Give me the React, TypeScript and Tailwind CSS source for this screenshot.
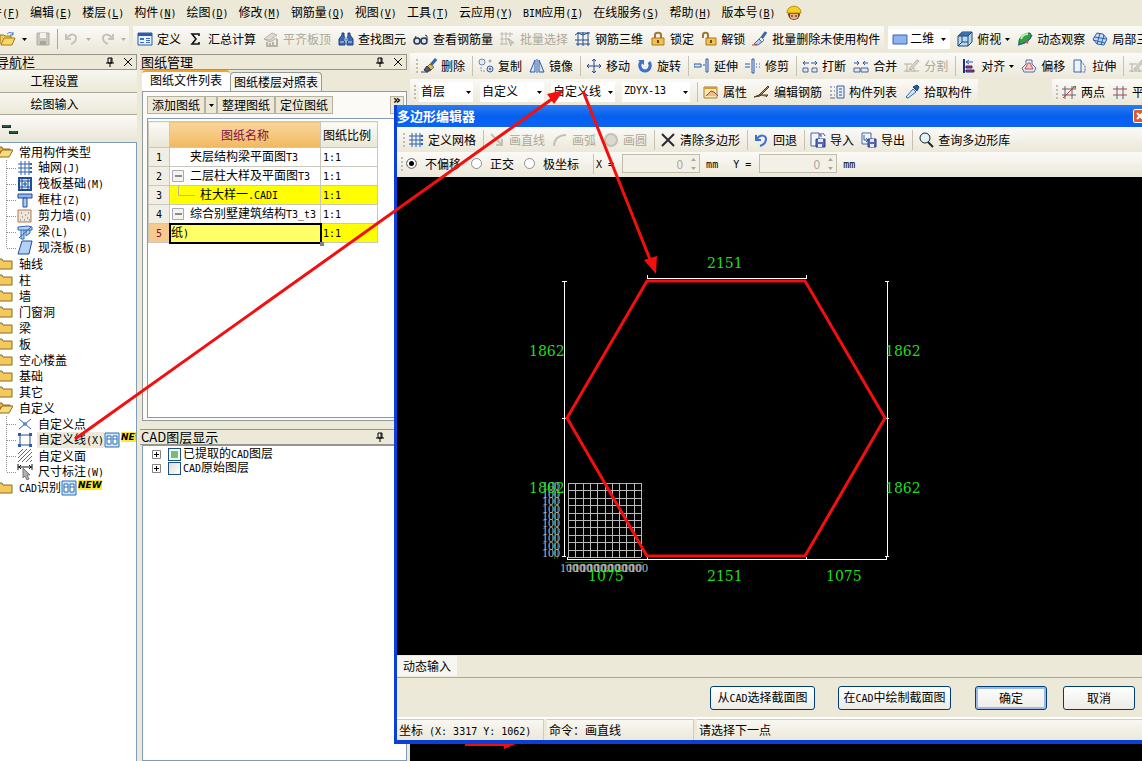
import React, { useState } from 'react';

const shapes: Record<string, React.ReactNode> = {
  folderOpen: (
    <>
      <path d="M0 13V4h4l1 1h6v2" fill="#f3cf63" stroke="#9a7420" />
      <path d="M1 14l3-7h11l-3 7z" fill="#fbd667" stroke="#a67c1c" />
      <path d="M7 3c2-2 4-2 6 0m0-2v3h-3" fill="none" stroke="#3b73c4" />
    </>
  ),
  save: (
    <>
      <path d="M2 2h12v12H2z" fill="#c8c6bd" stroke="#b0aea5" />
      <path d="M5 2h6v5H5z" fill="#f2f1ea" />
      <path d="M5 10h6v4H5z" fill="#a8a69c" />
    </>
  ),
  undoOff: <path d="M2 3v5h5M3 7c4-5 9-4 9 0 0 3-2 5-5 6" fill="none" stroke="#c6c3b8" strokeWidth="2" />,
  redoOff: <path d="M14 3v5H9m4-1c-4-5-9-4-9 0 0 3 2 5 5 6" fill="none" stroke="#c6c3b8" strokeWidth="2" />,
  define: (
    <>
      <path d="M1 2h14v12H1z" fill="#e6effc" stroke="#2c5aa8" />
      <path d="M1 2h14v3H1z" fill="#2c5aa8" />
      <path d="M3 7h4v2H3zM3 11h4v1H3zM9 7h4v1H9zM9 9h4v1H9zM9 11h4v1H9z" fill="#3e6fbe" />
    </>
  ),
  sigma: <path d="M11 5V3H4l4 5-4 5h7v-2" fill="none" stroke="#111" strokeWidth="1.6" />,
  slab: (
    <>
      <path d="M1 8l8-6 5 2-7 5zM1 8l6 3 7-4" fill="#dddace" stroke="#b5b2a6" />
      <path d="M4 11v4h10V8M7 15v-3M10 15v-4" fill="none" stroke="#b5b2a6" strokeWidth="2" />
    </>
  ),
  binoculars: (
    <>
      <path d="M4 2h2v3l1 2v7H1V8l3-4zM12 2h-2v3L9 7v7h6V8l-3-4z" fill="#3a68b0" stroke="#1f4482" />
      <path d="M7 7h2v3H7zM2 11h4M10 11h4" stroke="#c4dafa" fill="#1f4482" />
    </>
  ),
  glasses: (
    <>
      <circle cx="4" cy="10" r="3" fill="#d8e4f4" stroke="#26344c" strokeWidth="1.5" />
      <circle cx="11" cy="10" r="3" fill="#d8e4f4" stroke="#26344c" strokeWidth="1.5" />
      <path d="M7 9h1M14 9V5l-2-1M1 9l2-4" stroke="#26344c" fill="none" />
    </>
  ),
  batchSelect: (
    <>
      <path d="M2 1v13M6 1v13M0 3h13M0 8h8M0 13h8M10 1v5" fill="none" stroke="#bdbab0" />
      <path d="M8 7l6 5-3 0v3z" fill="#d4d1c6" stroke="#b5b2a6" />
    </>
  ),
  rebar3d: (
    <path d="M3 1v14M8 1v14M13 1v14M0 4l3-2h12M0 9h14M1 13h14M3 2l5 2 5-2" fill="none" stroke="#274f96" />
  ),
  lock: (
    <>
      <path d="M5 7V4c0-3 6-3 6 0v3" fill="none" stroke="#99783a" strokeWidth="2" />
      <path d="M2 7h12v7H2z" fill="#f3c04e" stroke="#a97a1e" />
      <path d="M7 9h2v3H7z" fill="#6e4a0c" />
    </>
  ),
  unlock: (
    <>
      <path d="M2 7V4c0-3 5-3 5 0v3" fill="none" stroke="#99783a" strokeWidth="2" />
      <path d="M5 7h10v7H5z" fill="#f3c04e" stroke="#a97a1e" />
      <path d="M9 9h2v3H9z" fill="#6e4a0c" />
    </>
  ),
  brush: (
    <>
      <path d="M14 1l-5 7" stroke="#3464ac" strokeWidth="3" />
      <path d="M9 6l3 3-2 2-3-3z" fill="#f0f3fa" stroke="#6b7890" />
      <path d="M7 8l3 3-4 3-4-1z" fill="#b7cdf0" stroke="#4a6798" />
      <path d="M0 14h5" stroke="#c33" />
    </>
  ),
  eraser: (
    <>
      <path d="M15 1l-5 6" stroke="#3464ac" strokeWidth="3" />
      <path d="M9 6l4 3-3 3-4-3z" fill="#e3b85c" stroke="#8b6a28" />
      <path d="M6 8l4 4-4 2-3-2z" fill="#4c5b7b" stroke="#27324c" />
      <path d="M0 14h7" stroke="#444" />
    </>
  ),
  plane: <path d="M1 4h14v9H1z" fill="#8fb2f1" stroke="#3e62b2" />,
  cube: (
    <>
      <path d="M1 5l4-4h10v10l-4 4H1z" fill="#b7d8f4" stroke="#22466f" />
      <path d="M1 5l4-4h10l-4 4z" fill="#3c71ad" />
      <path d="M1 5h10v10M11 5l4-4M5 5v6l-4 4M5 11h6" fill="none" stroke="#22466f" />
    </>
  ),
  orbit: (
    <>
      <path d="M2 13C1 8 5 2 13 2c2 2 1 5-1 7-3 3-6 4-10 4z" fill="#2fa23c" stroke="#186b28" />
      <path d="M4 8c1-3 4-5 7-5" stroke="#b9f0bc" strokeWidth="2" fill="none" />
      <path d="M1 14C6 13 12 10 15 4" stroke="#3961a8" strokeWidth="1.5" fill="none" />
      <circle cx="10" cy="11" r="1.5" fill="#e0524a" />
    </>
  ),
  local3d: (
    <>
      <path d="M5 2l6 1 4 5-3 6-7-1-4-5z" fill="#c6dcf6" stroke="#2c5ea8" />
      <path d="M8 2L5 13M12 4l-3 10M2 6l12 2M1 9l12 3" stroke="#2c5ea8" fill="none" />
    </>
  ),
  copy: (
    <>
      <circle cx="4" cy="4" r="3" fill="#e6ecf6" stroke="#7586a8" />
      <circle cx="12" cy="11" r="3" fill="#cfdcf2" stroke="#3f5f98" />
      <circle cx="12" cy="11" r="1" fill="#3f5f98" />
      <circle cx="12" cy="3" r="1" fill="none" stroke="#8a94a8" />
      <path d="M3 9v4h4" fill="none" stroke="#8a94a8" strokeDasharray="2 1" />
    </>
  ),
  mirror: <path d="M6 2v12H1zM10 2v12h5zM8 1v14" fill="#d6e6fa" stroke="#2c5aa8" />,
  move: (
    <path d="M8 1v14M1 8h14M6 3l2-2 2 2M6 13l2 2 2-2M3 6L1 8l2 2M13 6l2 2-2 2" fill="none" stroke="#23488c" />
  ),
  rotate: (
    <>
      <path d="M4 4c-3 4 0 9 4 9s7-5 4-9" fill="none" stroke="#3f6fca" strokeWidth="3" />
      <path d="M1 2h6v5z" fill="#3f6fca" />
    </>
  ),
  extend: (
    <>
      <path d="M0 6h7v3H0zM9 7h2" fill="#e0ebfa" stroke="#2c5aa8" />
      <path d="M12 1h2v13h-2z" fill="#e0ebfa" stroke="#2c5aa8" />
    </>
  ),
  trim: (
    <>
      <path d="M0 6h5M0 9h5M11 6h1M14 6h1M11 9h1M14 9h1" fill="none" stroke="#2c5aa8" />
      <path d="M7 1h2v14H7z" fill="#e0ebfa" stroke="#2c5aa8" />
    </>
  ),
  breakIt: (
    <>
      <path d="M1 10h5v4H1zM10 10h5v4h-5z" fill="#dfe8f6" stroke="#51668c" />
      <path d="M7 5H1l2-2M1 5l2 2M9 5h6l-2-2M15 5l-2 2" fill="none" stroke="#2558b0" />
    </>
  ),
  mergeIt: (
    <>
      <path d="M1 10h6v4H1zM8 10h7v4H8z" fill="#dfe8f6" stroke="#51668c" />
      <path d="M1 5h5L4 3M6 5L4 7M15 5h-5l2-2M10 5l2 2" fill="none" stroke="#2558b0" />
    </>
  ),
  split: (
    <path d="M0 6h8M0 13h15M3 6v8M10 10v4M5 11l8-9 2 1-8 9z" fill="#dcd9cd" stroke="#b3b0a4" />
  ),
  align: (
    <>
      <path d="M3 1v14" stroke="#222a7c" strokeWidth="2" />
      <path d="M5 4h7M5 4l3-2M5 4l3 2" stroke="#2558b0" fill="none" />
      <path d="M5 8h6v2H5zM5 12h8v2H5z" fill="#d9334a" stroke="#222a7c" />
    </>
  ),
  offset: (
    <>
      <path d="M5 2h6v4l4 4-2 4H3l-2-4 4-4z" fill="#e6ebf6" stroke="#55709e" />
      <path d="M7 5h2l3 6H4z" fill="#f5c6c4" stroke="#cc4d4d" />
    </>
  ),
  stretch: (
    <>
      <path d="M2 2h7v12H2z" fill="#eef3fb" stroke="#3a66ac" />
      <path d="M9 3l4 5v6H9" fill="none" stroke="#3a66ac" strokeDasharray="2 1" />
    </>
  ),
  props: (
    <>
      <path d="M1 3h13v11H1z" fill="#fbe7b1" stroke="#a5813a" />
      <path d="M1 3h13v2H1z" fill="#d49b32" />
      <path d="M3 12l5-5 3 1 4 4" fill="#f0b98a" stroke="#86552a" />
    </>
  ),
  editRebar: <path d="M0 13l5-2 9-9 1 1-9 9zM5 11h9l-2 2" fill="#b98f58" stroke="#4c3b28" />,
  listView: (
    <>
      <path d="M8 2h7v12H8z" fill="#e6effc" stroke="#3a5f9e" />
      <path d="M10 5h3M10 8h3M10 11h3" stroke="#2c4f8c" />
      <path d="M1 3h2M5 3h1M1 7h2M5 7h1M1 11h2M5 11h1M1 14h5" stroke="#5a6c8c" />
    </>
  ),
  picker: (
    <>
      <path d="M3 14l-1-1 7-8 3 3-8 6z" fill="#d5e6fb" stroke="#3a66ac" />
      <path d="M9 3l4 4 2-4-2-2z" fill="#2a5aaf" stroke="#173c7c" />
    </>
  ),
  twoPoint: (
    <>
      <path d="M4 2v13M11 2v13M1 5h14M1 11h14" stroke="#5e6577" fill="none" />
      <path d="M2 14L14 2" stroke="#bb3b3b" />
      <path d="M12 2h3v3z" fill="#3b8c40" />
    </>
  ),
  parallel: (
    <>
      <path d="M5 2v13M11 2v13" stroke="#44649f" />
      <path d="M1 5h14M1 11h14" stroke="#b14343" />
    </>
  ),
  grid: (
    <>
      <path d="M4 1v14M8 1v14M12 1v14M1 4h13M1 8h13M1 12h13" stroke="#2f62b4" fill="none" />
      <path d="M13 3h2v2h-2zM13 7h2v2h-2zM13 11h2v2h-2z" fill="#2f62b4" />
    </>
  ),
  lineOff: <path d="M2 2l10 10M13 7v6H7" fill="none" stroke="#c3c0b4" strokeWidth="2" />,
  arcOff: <path d="M2 14c0-6 4-11 12-11" fill="none" stroke="#c3c0b4" strokeWidth="2" />,
  circleOff: <circle cx="8" cy="8" r="6" fill="#dbd8cd" stroke="#c3c0b4" strokeWidth="2" />,
  cross: <path d="M2 2l12 12M14 2L2 14" stroke="#2c2c2c" strokeWidth="2" fill="none" />,
  back: <path d="M3 3v5h5M4 7c3-5 9-4 9 0 0 4-3 6-6 7" fill="none" stroke="#3f6fd2" strokeWidth="2" />,
  importIt: (
    <>
      <path d="M1 1h8v13H1z" fill="#f2f6fc" stroke="#4a67a0" />
      <path d="M6 7h9v8H6z" fill="#5667b4" stroke="#2f3d84" />
      <path d="M8 7h5v3H8zM8 12h4v3H8z" fill="#e3e8f8" />
      <path d="M15 4c-1-3-3-3-5-1m0-2v3h2" fill="none" stroke="#2558b0" />
    </>
  ),
  exportIt: (
    <>
      <path d="M1 1h9v11H1z" fill="#f2f6fc" stroke="#4a67a0" />
      <path d="M7 7h8v8H7z" fill="#5667b4" stroke="#2f3d84" />
      <path d="M9 7h4v3H9zM9 12h4v3H9z" fill="#e3e8f8" />
      <path d="M3 3v5h4M5 6l2 2-2 2" fill="none" stroke="#2558b0" />
    </>
  ),
  search: (
    <>
      <circle cx="7" cy="6" r="5" fill="#def4f8" stroke="#222" />
      <path d="M10 10l5 5" stroke="#222" strokeWidth="2" />
    </>
  ),
  raft: (
    <>
      <path d="M2 2h12v12H2z" fill="#dbe8fa" stroke="#1f4d96" strokeWidth="2" />
      <path d="M5 2v12M11 2v12M2 5h12M2 11h12M7 7h2v2H7z" stroke="#1f4d96" fill="none" />
    </>
  ),
  column: (
    <>
      <path d="M1 2h14v4H1z" fill="#8fb5ee" stroke="#1f4d96" />
      <path d="M6 6h4v9H6z" fill="#a9c8f4" stroke="#1f4d96" />
    </>
  ),
  shearWall: (
    <>
      <path d="M1 2h13v12H1z" fill="#ece6df" stroke="#b5794e" />
      <path d="M4 5h1M8 7h1M11 5h1M5 9h1M10 10h1M3 12h1M7 12h1M12 12h1" stroke="#6b6661" />
    </>
  ),
  beam: (
    <>
      <path d="M1 3l10-1 4 1v3H1zM4 6v9h3V6M9 6v6l4-3V6" fill="#b7d4f6" stroke="#2a66b4" />
      <path d="M2 14L14 3" stroke="#2a66b4" />
    </>
  ),
  slabCast: <path d="M5 1h10l-3 13H1z" fill="#b3d0f7" stroke="#1f4d96" />,
  point: (
    <>
      <path d="M2 3l12 10M14 3L2 13" stroke="#2f62b4" fill="none" />
      <path d="M7 7h2v2H7z" fill="#dbe8fa" stroke="#2f62b4" />
    </>
  ),
  lineShape: (
    <>
      <path d="M3 3h10v10H3z" fill="#fff" stroke="#2f4f86" />
      <path d="M1 1h3v3H1zM12 1h3v3h-3zM1 12h3v3H1zM12 12h3v3h-3z" fill="#2f5ca8" />
    </>
  ),
  area: (
    <path d="M1 6l5-5M1 10l9-9M1 14L14 1M5 14l10-10M9 14l6-6M13 14l2-2" stroke="#3a6cb8" fill="none" />
  ),
  dimension: (
    <>
      <path d="M1 0v6M15 0v6M1 3h14M4 1L2 3l2 2M12 1l2 2-2 2" stroke="#111" fill="none" />
      <path d="M6 4v10l2-2 2 4 2-1-2-4h3z" fill="#b0b0b0" stroke="#777" />
    </>
  ),
  book: (
    <>
      <path d="M1 1h14v14H1z" fill="#cfe5fb" stroke="#2d6cb5" />
      <path d="M3 4h4v8H3zM9 4h4v8H9z" fill="#fff" stroke="#2d6cb5" />
      <path d="M3 7h4M9 7h4" stroke="#2d6cb5" />
    </>
  ),
  worker: (
    <>
      <circle cx="8" cy="9" r="6" fill="#6b3d1e" />
      <path d="M4 9h8v3c-1 3-7 3-8 0z" fill="#e8ad80" />
      <path d="M1 8c0-9 14-9 14 0z" fill="#f8cf1d" stroke="#b08c0c" />
      <path d="M6 10v2M10 10v2" stroke="#222" />
    </>
  ),
};

const Icon: React.FC<{ name: string }> = ({ name }) => (
  <svg viewBox="0 0 16 16" className="w-4 h-4 shrink-0" aria-hidden="true">
    {shapes[name]}
  </svg>
);

// Latin runs are set half as wide as the Chinese characters round them
const Txt: React.FC<{ children: string }> = ({ children }) => (
  <>
    {children.split(/([\x20-\x7e]+)/).map((part, i) =>
      i % 2 ? (
        <span key={i} className="font-['DejaVu_Sans_Mono',monospace] text-[10px] whitespace-pre">{part}</span>
      ) : (
        part
      ),
    )}
  </>
);

const Caret = () => (
  <svg viewBox="0 0 5 3" className="w-[5px] h-[3px] shrink-0" aria-hidden="true">
    <path d="M0 0h5L2.500 3z" fill="currentColor" />
  </svg>
);

const Grip = () => (
  <svg viewBox="0 0 2 16" className="w-0.5 h-4 shrink-0" aria-hidden="true">
    <path d="M0 1h2v2H0zM0 5h2v2H0zM0 9h2v2H0zM0 13h2v2H0z" fill="#c1bead" />
  </svg>
);

const Sep = () => <span className="w-px h-5 -mr-0.5 shrink-0 bg-[#c5c2b2]" />;

interface ToolProps {
  icon: string;
  label: string;
  disabled?: boolean;
  caret?: boolean;
}

const Tool: React.FC<ToolProps> = ({ icon, label, disabled, caret }) => (
  <button
    type="button"
    disabled={disabled}
    className="flex items-center gap-1 shrink-0 whitespace-nowrap disabled:text-[#aca899]"
  >
    <Icon name={icon} />
    <span>{label}</span>
    {caret && <Caret />}
  </button>
);

const menus = [
  ['文件', 'F'], ['编辑', 'E'], ['楼层', 'L'], ['构件', 'N'], ['绘图', 'D'], ['修改', 'M'], ['钢筋量', 'Q'],
  ['视图', 'V'], ['工具', 'T'], ['云应用', 'Y'], ['BIM应用', 'I'], ['在线服务', 'S'], ['帮助', 'H'], ['版本号', 'B'],
];

const MenuBar = () => (
  <nav className="flex items-center gap-2.5 h-[26px] -ml-[22px] shrink-0">
    {menus.map(([name, key]) => (
      <button key={name} type="button" className="shrink-0 whitespace-nowrap">
        <Txt>{name}</Txt>
        <span className="font-['DejaVu_Sans_Mono',monospace] text-[10px]">
          (<u>{key}</u>)
        </span>
      </button>
    ))}
    <Icon name="worker" />
  </nav>
);

const strip = 'flex items-center shrink-0 bg-gradient-to-b from-[#fbfaf7] to-[#ebe8d9]';

const MainToolbar = () => (
  <div className="flex gap-1 h-[27px] pb-px shrink-0 overflow-hidden">
    <div className={`${strip} w-[129px] gap-2`}>
      <button type="button" aria-label="打开" className="flex items-center gap-1.5"><Icon name="folderOpen" /><Caret /></button>
      <button type="button" aria-label="保存" disabled><Icon name="save" /></button>
      <span className="w-px h-5 -mx-0.5 bg-[#aca899]" />
      <button type="button" aria-label="撤销" disabled className="flex items-center gap-1.5 text-[#b5b2a6]"><Icon name="undoOff" /><Caret /></button>
      <button type="button" aria-label="恢复" disabled className="flex items-center gap-1.5 text-[#b5b2a6]"><Icon name="redoOff" /><Caret /></button>
    </div>
    <div className={`${strip} gap-[7px] px-1`}>
      <Tool icon="define" label="定义" />
      <Tool icon="sigma" label="汇总计算" />
      <Tool icon="slab" label="平齐板顶" disabled />
      <Tool icon="binoculars" label="查找图元" />
      <Tool icon="glasses" label="查看钢筋量" />
      <Tool icon="batchSelect" label="批量选择" disabled />
      <Tool icon="rebar3d" label="钢筋三维" />
      <Tool icon="lock" label="锁定" />
      <Tool icon="unlock" label="解锁" />
      <Tool icon="brush" label="批量删除未使用构件" />
    </div>
    <div className={`${strip} flex-1 gap-[7px]`}>
      <div className="relative flex items-center h-5 w-[62px] pl-1 bg-white shrink-0">
        <Icon name="plane" />
        <select aria-label="视图模式" className="appearance-none absolute inset-0 pl-[22px] pb-0.5 bg-transparent">
          <option>二维</option>
        </select>
        <span className="absolute right-1"><Caret /></span>
      </div>
      <Tool icon="cube" label="俯视" caret />
      <Tool icon="orbit" label="动态观察" />
      <Tool icon="local3d" label="局部三维" />
    </div>
  </div>
);

const EditToolbar = () => (
  <div className={`${strip} h-[26px] gap-[7px] pl-1.5 overflow-hidden`}>
    <div className="-mr-1 flex"><Grip /></div>
    <Tool icon="eraser" label="删除" />
    <Sep />
    <Tool icon="copy" label="复制" />
    <Tool icon="mirror" label="镜像" />
    <Sep />
    <Tool icon="move" label="移动" />
    <Tool icon="rotate" label="旋转" />
    <Sep />
    <Tool icon="extend" label="延伸" />
    <Tool icon="trim" label="修剪" />
    <Sep />
    <Tool icon="breakIt" label="打断" />
    <Tool icon="mergeIt" label="合并" />
    <Tool icon="split" label="分割" disabled />
    <Sep />
    <Tool icon="align" label="对齐" caret />
    <Tool icon="offset" label="偏移" />
    <Tool icon="stretch" label="拉伸" />
    <Sep />
    <button type="button" aria-label="设置夹点" disabled><Icon name="split" /></button>
  </div>
);

const Combo: React.FC<{ label: string; value: string; className: string }> = ({ label, value, className }) => (
  <div className={`relative flex items-center h-5 shrink-0 bg-white ${className}`}>
    <select aria-label={label} className="appearance-none w-full pl-0.5 pb-0.5 bg-transparent">
      <option>{value}</option>
    </select>
    <span className="absolute right-0.5"><Caret /></span>
  </div>
);

const ComponentToolbar = () => (
  <div className="flex justify-between overflow-hidden">
    <div className={`${strip} h-[26px] gap-[7px] pl-1 pr-1.5`}>
      <div className="-mr-1 flex"><Grip /></div>
      <Combo label="楼层" value="首层" className="w-[54px]" />
      <Combo label="构件大类" value="自定义" className="w-[64px]" />
      <Combo label="构件类型" value="自定义线" className="w-[64px]" />
      <Combo label="构件" value="ZDYX-13" className="w-[68px] font-['DejaVu_Sans_Mono',monospace] text-[10px]" />
      <Sep />
      <Tool icon="props" label="属性" />
      <Tool icon="editRebar" label="编辑钢筋" />
      <Tool icon="listView" label="构件列表" />
      <Tool icon="picker" label="拾取构件" />
    </div>
    <div className={`${strip} h-[26px] gap-[7px] pl-1 w-[90px] overflow-hidden`}>
      <div className="-mr-1 flex"><Grip /></div>
      <Tool icon="twoPoint" label="两点" />
      <Tool icon="parallel" label="平行" />
    </div>
  </div>
);

const Pin = () => (
  <svg viewBox="0 0 8 10" className="w-2 h-2.5" aria-hidden="true">
    <path d="M2 1h4v5H2zM5 1v5M0 6h8M4 6v4" fill="none" stroke="#000" />
  </svg>
);

const PanelHeader: React.FC<{ title: string; clipped?: boolean }> = ({ title, clipped }) => (
  <header className="flex items-center h-4 shrink-0 border border-[#96938a] border-l-0 pr-1 overflow-hidden">
    <h2 className={`flex-1 text-[13px] leading-[14px] whitespace-nowrap ${clipped ? '-ml-1' : 'pl-px'}`}>{title}</h2>
    <button type="button" aria-label="固定"><Pin /></button>
    <button type="button" aria-label="关闭" className="ml-2.5">
      <svg viewBox="0 0 8 8" className="w-2 h-2"><path d="M0 0l8 8M8 0L0 8" stroke="#000" /></svg>
    </button>
  </header>
);

const NewBadge = () => (
  <span className="self-start bg-[#ffe928] text-[9px] leading-[10px] font-black italic font-['DejaVu_Sans',sans-serif]">NEW</span>
);

const Folder: React.FC<{ open?: boolean }> = ({ open }) => (
  <svg viewBox="0 0 13 14" className="w-[13px] h-3.5 shrink-0" aria-hidden="true">
    {open ? (
      <>
        <path d="M-3 2h5l1 2h7v3H0z" fill="#e2b545" stroke="#8d6a1c" />
        <path d="M-2 12l4-7h11l-4 7z" fill="#fbdc7a" stroke="#8d6a1c" />
      </>
    ) : (
      <path d="M-3 2h5l1 2h9v8H-3z" fill="#f3c95c" stroke="#8d6a1c" />
    )}
  </svg>
);

interface TreeItem {
  label: string;
  icon?: string;
  open?: boolean;
  isNew?: boolean;
  selected?: boolean;
  last?: boolean;
}

const tree: TreeItem[] = [
  { label: '常用构件类型', open: true },
  { label: '轴网(J)', icon: 'grid' },
  { label: '筏板基础(M)', icon: 'raft' },
  { label: '框柱(Z)', icon: 'column' },
  { label: '剪力墙(Q)', icon: 'shearWall' },
  { label: '梁(L)', icon: 'beam' },
  { label: '现浇板(B)', icon: 'slabCast', last: true },
  { label: '轴线' },
  { label: '柱' },
  { label: '墙' },
  { label: '门窗洞' },
  { label: '梁' },
  { label: '板' },
  { label: '空心楼盖' },
  { label: '基础' },
  { label: '其它' },
  { label: '自定义', open: true },
  { label: '自定义点', icon: 'point' },
  { label: '自定义线(X)', icon: 'lineShape', selected: true, isNew: true },
  { label: '自定义面', icon: 'area' },
  { label: '尺寸标注(W)', icon: 'dimension', last: true },
  { label: 'CAD识别', isNew: true },
];

const TreeRow: React.FC<{ item: TreeItem }> = ({ item }) => (
  <li className="flex items-center h-4 whitespace-nowrap overflow-hidden">
    {item.icon ? (
      <>
        <svg viewBox="0 0 17 16" className="w-[17px] h-4 shrink-0" aria-hidden="true">
          <path
            d={item.last ? 'M6.500 0v8M7 8.500h10' : 'M6.500 0v16M7 8.500h10'}
            stroke="#8f8f8f"
            strokeDasharray="1 1"
            fill="none"
          />
        </svg>
        <Icon name={item.icon} />
      </>
    ) : (
      <Folder open={item.open} />
    )}
    <button
      type="button"
      className={`shrink-0 leading-4 ${item.icon ? 'ml-1 pl-px' : 'ml-1.5'} ${item.selected ? 'bg-[#ece9d8]' : ''}`}
    >
      <Txt>{item.label}</Txt>
    </button>
    {item.isNew && (
      <span className="flex gap-px h-4">
        <Icon name="book" />
        <NewBadge />
      </span>
    )}
  </li>
);

const NavPanel = () => (
  <aside className="flex flex-col w-[137px] shrink-0">
    <PanelHeader title="导航栏" clipped />
    <button type="button" className="h-[23px] shrink-0 pr-7 border-b border-[#aca899] bg-gradient-to-b from-[#f7f6ef] to-[#ece9d8]">工程设置</button>
    <button type="button" className="h-[22px] shrink-0 pr-7 border-b border-[#aca899] bg-gradient-to-b from-[#f7f6ef] to-[#ece9d8]">绘图输入</button>
    <div className="h-[27px] shrink-0 pt-2.5 bg-gradient-to-b from-[#fbfaf7] to-[#e9e6d6]">
      <svg viewBox="0 0 20 10" className="w-5 h-2.5" aria-hidden="true">
        <path d="M2 0h9v3H2zM9 6h9v3H9z" fill="#1d2c2c" />
        <path d="M3 1h7M10 7h7" stroke="#2a8a68" />
      </svg>
    </div>
    <ul className="flex-1 pt-px bg-white border-t border-r border-[#7f9db9] overflow-hidden">
      {tree.map((item) => (
        <TreeRow key={`${item.icon}${item.label}`} item={item} />
      ))}
    </ul>
  </aside>
);

const drawings = [
  { name: '夹层结构梁平面图T3', ratio: '1:1', level: 1 },
  { name: '二层柱大样及平面图T3', ratio: '1:1', level: 1, expander: true },
  { name: '柱大样一.CADI', ratio: '1:1', level: 2, marked: true },
  { name: '综合别墅建筑结构T3_t3', ratio: '1:1', level: 1, expander: true },
  { name: '纸)', ratio: '1:1', level: 0, marked: true, current: true },
];

const DrawingTable = () => (
  <table className="table-fixed w-[229px] border-collapse text-left">
    <thead>
      <tr className="h-[26px]">
        <th className="w-[21px] border border-[#c9c6ba] bg-gradient-to-b from-[#fbfaf7] to-[#e9e6d6]" aria-label="序号" />
        <th className="w-[151px] border border-[#c9c6ba] bg-gradient-to-b from-[#f9d59b] to-[#f0b95f] font-normal text-center text-[#7b0f4a]">图纸名称</th>
        <th className="w-[57px] border border-[#c9c6ba] bg-gradient-to-b from-[#fbfaf7] to-[#e9e6d6] font-normal pl-0.5 whitespace-nowrap">图纸比例</th>
      </tr>
    </thead>
    <tbody>
      {drawings.map((d, i) => (
        <tr key={d.name} className="h-[19px]">
          <td className={`p-0 text-center border border-[#c9c6ba] ${d.current ? 'bg-[#f7c98d] text-[#7b0f4a]' : 'bg-[#f1efe5]'}`}>
            <Txt>{String(i + 1)}</Txt>
          </td>
          <td
            className={`relative p-0 border border-[#c9c6ba] whitespace-nowrap ${d.marked && !d.current ? 'bg-[#ffff00]' : ''} ${
              d.current ? 'bg-[#ffff66] outline-2 -outline-offset-1 outline-black' : ''
            }`}
          >
            <div className="flex items-center h-[18px] leading-4">
              {d.level > 0 && (
                <svg viewBox="0 0 19 18" className="w-[19px] h-[18px] shrink-0" aria-hidden="true">
                  {d.expander && <path d="M2.500 3.500h11v11h-11z" fill="#f4f3ee" stroke="#a9a9b4" />}
                  {d.expander && <path d="M5 9h7" stroke="#222" />}
                  {d.level === 2 && <path d="M8.500 0v9.500H19" fill="none" stroke="#b9b48c" />}
                </svg>
              )}
              {d.level === 2 && <span className="w-[6px] h-px mr-1 bg-[#b9b48c]" />}
              <span className="pl-px"><Txt>{d.name}</Txt></span>
            </div>
            {d.current && <span className="absolute -right-1 -bottom-1 size-1 bg-[#808080]" />}
          </td>
          <td className={`p-0 pl-0.5 border border-[#c9c6ba] ${d.marked ? 'bg-[#ffff00]' : ''}`}>
            <Txt>{d.ratio}</Txt>
          </td>
        </tr>
      ))}
    </tbody>
  </table>
);

const LayerRow: React.FC<{ label: string; defaultChecked?: boolean }> = ({ label, defaultChecked }) => (
  <li className="flex items-center h-3.5">
    <button type="button" aria-label="展开" className="mr-[7px]">
      <svg viewBox="0 0 9 9" className="w-[9px] h-[9px]">
        <path d="M.5.5h8v8h-8z" fill="#fff" stroke="#848484" />
        <path d="M2 4.500h5M4.500 2v5" stroke="#000" />
      </svg>
    </button>
    <label className="flex items-center gap-0.5 leading-[14px]">
      <input
        type="checkbox"
        defaultChecked={defaultChecked}
        className="appearance-none size-[13px] border border-[#1c5180] bg-gradient-to-br from-[#dcdcd7] to-white checked:bg-none checked:bg-[#73c073] checked:shadow-[inset_0_0_0_2px_#f4f8f4]"
      />
      <span><Txt>{label}</Txt></span>
    </label>
  </li>
);

const smallButton = 'h-[18px] border border-[#b5b29f] bg-[#ece9d8] whitespace-nowrap';

const DrawingPanel = () => (
  <section className="flex flex-col w-[267px] shrink-0 ml-[3px]">
    <PanelHeader title="图纸管理" />
    <div role="tablist" className="flex items-end h-[21px] shrink-0 pl-0.5">
      <button type="button" role="tab" aria-selected="true" className="h-[21px] w-[88px] shrink-0 rounded-t-sm border-t-2 border-[#f5a32c] bg-white pb-1 leading-4">图纸文件列表</button>
      <button type="button" role="tab" aria-selected="false" className="h-[19px] w-[92px] shrink-0 rounded-t-sm border border-b-0 border-[#919b9c] bg-[#f6f5ef]">图纸楼层对照表</button>
    </div>
    <div className="flex flex-col h-[330px] shrink-0 ml-0.5 bg-[#fbfaf7] border border-[#919b9c]">
      <div className="flex items-center h-[26px] shrink-0 pl-1">
        <button type="button" className={`${smallButton} w-[58px] leading-4`}>添加图纸</button>
        <button type="button" aria-label="更多" className={`${smallButton} flex items-center justify-center w-3`}><Caret /></button>
        <button type="button" className={`${smallButton} w-[58px] leading-4`}>整理图纸</button>
        <button type="button" className={`${smallButton} w-[58px] leading-4`}>定位图纸</button>
        <button type="button" aria-label="其他" className={`${smallButton} flex items-start justify-center w-[14px] ml-auto mr-0.5 leading-[7px] font-bold font-['DejaVu_Sans',sans-serif]`}>»</button>
      </div>
      <div className="flex-1 ml-1 mb-0.5 pt-0.5 border border-r-0 border-[#7f9db9] bg-white">
        <DrawingTable />
      </div>
    </div>
    <div className="h-2 shrink-0" />
    <PanelHeader title="CAD图层显示" />
    <ul className="flex-1 ml-0.5 pt-px pl-[9px] bg-white border border-[#7f9db9]">
      <LayerRow label="已提取的CAD图层" defaultChecked />
      <LayerRow label="CAD原始图层" />
    </ul>
  </section>
);

const steps = Array.from({ length: 11 }, (_, i) => i);

const dimensions = [
  { x: 310, y: 91, text: '2151' },
  { x: 132, y: 179, text: '1862' },
  { x: 132, y: 316, text: '1862' },
  { x: 488, y: 179, text: '1862' },
  { x: 488, y: 316, text: '1862' },
  { x: 191, y: 404, text: '1075' },
  { x: 310, y: 404, text: '2151' },
  { x: 429, y: 404, text: '1075' },
];

const PolygonCanvas = () => (
  <svg className="block w-full flex-1 min-h-0 bg-black" role="img" aria-label="多边形">
    <g stroke="#b8b8b8" shapeRendering="crispEdges">
      {steps.map((i) => (
        <path key={i} d={`M${Math.round(171 + i * 7.3)} 306v74M171 ${Math.round(306 + i * 7.4)}h73`} />
      ))}
    </g>
    <path d="M157 306v76M160 306v76M168 385h78M168 388h78" stroke="#1c5a20" shapeRendering="crispEdges" />
    <g fill="#b8b8b8" fontSize="12" fontFamily="Liberation Serif, serif">
      {steps.map((i) => (
        <text key={i} x={Math.round(163 + i * 7)} y="395">100</text>
      ))}
      {steps.slice(1).map((i) => (
        <text key={i} x="145" y={Math.round(306 + i * 7.4)}>100</text>
      ))}
    </g>
    <path
      d="M250 98v3h159v-3M165 104h5M167 104v275M165 241h4M165 379h4M488 104h4M490 104v275M488 241h4M488 379h4M170 380v2h319v-2M250 380v2M409 380v2"
      fill="none"
      stroke="#fff"
      shapeRendering="crispEdges"
    />
    <path d="M250 104h158l80 137-80 138H250l-80-138z" fill="none" stroke="#f40f0f" strokeWidth="3" />
    <g fill="#22dd22" fontSize="14" fontFamily="DejaVu Serif, serif">
      {dimensions.map((d) => (
        <text key={`${d.x}-${d.y}`} x={d.x} y={d.y}>{d.text}</text>
      ))}
    </g>
  </svg>
);

const OffsetInput: React.FC<{ axis: string; className: string }> = ({ axis, className }) => (
  <label className={`flex items-center ${className}`}>
    <span className="mr-2"><Txt>{`${axis} =`}</Txt></span>
    <span className="flex items-center w-[78px] h-[19px] border border-[#c0bdad] bg-[#f3f1e7]">
      <input disabled value="0" readOnly className="w-[60px] bg-transparent text-right text-[#aca899]" />
      <svg viewBox="0 0 5 12" className="w-[5px] h-3 ml-2" aria-hidden="true">
        <path d="M0 3h5L2.500 0zM0 9h5l-2.500 3z" fill="#aca899" />
      </svg>
    </span>
    <span className="ml-1.5"><Txt>mm</Txt></span>
  </label>
);

const modes = ['不偏移', '正交', '极坐标'];

const dialogButton = 'h-6 rounded-[3px] border border-[#003c74] bg-gradient-to-b from-white to-[#ecebe5] whitespace-nowrap';

const PolygonDialog = () => {
  const [mode, setMode] = useState('不偏移');

  return (
    <div
      role="dialog"
      aria-label="多边形编辑器"
      className="absolute left-[394px] -right-2 top-[105px] bottom-[17px] flex flex-col border-x-3 border-b-4 border-[#0a3fd8] bg-[#ece9d8]"
    >
      <div className="flex items-center justify-between h-[22px] shrink-0 bg-gradient-to-b from-[#2a7bf2] via-[#0560ee] to-[#0b63f5] text-white">
        <h1 className="text-[13px] font-bold leading-5">多边形编辑器</h1>
        <button type="button" aria-label="关闭" className="flex items-center justify-center size-[14px] rounded-xs border border-white bg-[#dd5a34]">
          <svg viewBox="0 0 8 8" className="w-2 h-2"><path d="M1 1l6 6M7 1L1 7" stroke="#fff" strokeWidth="2" /></svg>
        </button>
      </div>

      <div className={`${strip} h-[25px] gap-[7px] pl-1.5 overflow-hidden`}>
        <div className="-mr-1 flex"><Grip /></div>
        <Tool icon="grid" label="定义网格" />
        <Sep />
        <Tool icon="lineOff" label="画直线" disabled />
        <Tool icon="arcOff" label="画弧" disabled />
        <Tool icon="circleOff" label="画圆" disabled />
        <Sep />
        <Tool icon="cross" label="清除多边形" />
        <Sep />
        <Tool icon="back" label="回退" />
        <Sep />
        <Tool icon="importIt" label="导入" />
        <Tool icon="exportIt" label="导出" />
        <Sep />
        <Tool icon="search" label="查询多边形库" />
      </div>

      <div className={`${strip} h-[25px] pl-1 pb-0.5 overflow-hidden`}>
        <Grip />
        <fieldset className="flex items-center gap-2.5 pl-[3px] pr-3.5">
          {modes.map((m) => (
            <label key={m} className="flex items-center gap-2 whitespace-nowrap">
              <input
                type="radio"
                name="mode"
                checked={mode === m}
                onChange={() => setMode(m)}
                className="appearance-none size-[11px] rounded-full border border-[#8e8f8f] bg-white checked:bg-black checked:shadow-[inset_0_0_0_2px_#fff]"
              />
              {m}
            </label>
          ))}
        </fieldset>
        <Sep />
        <OffsetInput axis="X" className="ml-1" />
        <OffsetInput axis="Y" className="ml-[15px]" />
      </div>

      <PolygonCanvas />

      <div className="flex h-[23px] shrink-0 border-b border-[#aca899]">
        <button type="button" className="px-1.5 my-px bg-[#f7f6f0]">动态输入</button>
      </div>
      <div className="flex items-center justify-end h-[39px] shrink-0 pr-3">
        <button type="button" className={`${dialogButton} w-[105px] mr-[23px]`}><Txt>从CAD选择截面图</Txt></button>
        <button type="button" className={`${dialogButton} w-[113px] mr-6`}><Txt>在CAD中绘制截面图</Txt></button>
        <button type="button" className={`${dialogButton} w-[72px] mr-4 shadow-[inset_0_0_0_2px_#9db9ea]`}>确定</button>
        <button type="button" className={`${dialogButton} w-[72px]`}>取消</button>
      </div>
      <footer className="flex gap-[3px] h-[23px] shrink-0 border-t-2 border-white leading-5 whitespace-nowrap">
        <span className="w-[147px] pl-0.5 border-t border-r border-[#cfccbb] bg-gradient-to-b from-[#f8f7f2] to-[#ece9d8]"><Txt>坐标 (X: 3317 Y: 1062)</Txt></span>
        <span className="w-[147px] pl-0.5 border-t border-r border-[#cfccbb] bg-gradient-to-b from-[#f8f7f2] to-[#ece9d8]">命令：画直线</span>
        <span className="flex-1 pl-0.5 border-t border-[#cfccbb] bg-gradient-to-b from-[#f8f7f2] to-[#ece9d8]">请选择下一点</span>
      </footer>
    </div>
  );
};

const App = () => (
  <div className="relative flex flex-col h-screen overflow-hidden bg-[#ece9d8] text-black text-[12px] leading-4 font-['Noto_Sans_CJK_SC',sans-serif]">
    <MenuBar />
    <MainToolbar />
    <div className="flex flex-1 min-h-0">
      <div className="flex pt-px">
        <NavPanel />
        <DrawingPanel />
      </div>
      <main className="flex flex-col flex-1 min-w-0 ml-[3px]">
        <EditToolbar />
        <ComponentToolbar />
        <div className="flex flex-1 flex-col justify-end bg-black">
          <svg className="w-full h-5" aria-hidden="true">
            <path d="M55 2h38V0l15 2-14 6V5H55z" fill="#f40f0f" />
          </svg>
        </div>
      </main>
    </div>

    <PolygonDialog />

    {/* Callout arrows */}
    <svg className="absolute inset-0 w-full h-full pointer-events-none" aria-hidden="true">
      <path d="M75 439L552 99M583 91L651 262" stroke="#f40f0f" strokeWidth="3" fill="none" />
      <path d="M564 90l-10 14-7-10zM656 274l-12-14 13-4z" fill="#f40f0f" />
    </svg>
  </div>
);

export default App;
